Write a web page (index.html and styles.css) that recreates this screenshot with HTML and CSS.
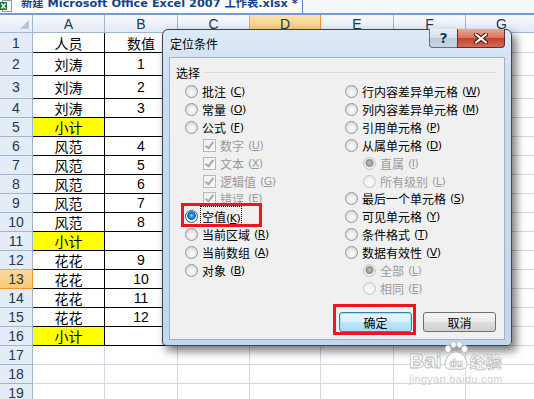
FILE: index.html
```html
<!DOCTYPE html>
<html lang="zh-CN">
<head>
    <meta charset="UTF-8">
    <title>定位条件</title>
    <link rel="stylesheet" href="styles.css">
</head>
<body>
    <div class="tabbar">
        <div class="tab">
            <svg class="xl-icon" width="12" height="12" viewBox="0 0 12 12">
                <rect x="2.5" y="0.5" width="9" height="11" fill="#fff" stroke="#8a9bb0"/>
                <rect x="0" y="2" width="7" height="8" fill="#1f7a3a"/>
                <path d="M1.5 3.5 L5.5 8.5 M5.5 3.5 L1.5 8.5" stroke="#fff" stroke-width="1.3"/>
            </svg>
            <span class="tab-text">新建 Microsoft Office Excel 2007 工作表.xlsx *</span>
        </div>
    </div>

    <div class="sheet">
        <div class="ch corner"><svg width="9" height="9"><path d="M9 0 L9 9 L0 9Z" fill="#b4c5dc"/></svg></div>
        <div class="ch">A</div><div class="ch">B</div><div class="ch">C</div><div class="ch ch-on">D</div><div class="ch">E</div><div class="ch">F</div><div class="ch">G</div>

        <div class="rh">1</div><div class="d">人员</div><div class="d">数值</div><div></div><div></div><div></div><div></div><div></div>
        <div class="rh">2</div><div class="d">刘涛</div><div class="d">1</div><div></div><div></div><div></div><div></div><div></div>
        <div class="rh">3</div><div class="d">刘涛</div><div class="d">2</div><div></div><div></div><div></div><div></div><div></div>
        <div class="rh">4</div><div class="d">刘涛</div><div class="d">3</div><div></div><div></div><div></div><div></div><div></div>
        <div class="rh">5</div><div class="d sub">小计</div><div class="d"></div><div></div><div></div><div></div><div></div><div></div>
        <div class="rh">6</div><div class="d">风范</div><div class="d">4</div><div></div><div></div><div></div><div></div><div></div>
        <div class="rh">7</div><div class="d">风范</div><div class="d">5</div><div></div><div></div><div></div><div></div><div></div>
        <div class="rh">8</div><div class="d">风范</div><div class="d">6</div><div></div><div></div><div></div><div></div><div></div>
        <div class="rh">9</div><div class="d">风范</div><div class="d">7</div><div></div><div></div><div></div><div></div><div></div>
        <div class="rh">10</div><div class="d">风范</div><div class="d">8</div><div></div><div></div><div></div><div></div><div></div>
        <div class="rh">11</div><div class="d sub">小计</div><div class="d"></div><div></div><div></div><div></div><div></div><div></div>
        <div class="rh">12</div><div class="d">花花</div><div class="d">9</div><div></div><div></div><div></div><div></div><div></div>
        <div class="rh rh-on">13</div><div class="d">花花</div><div class="d">10</div><div></div><div></div><div></div><div></div><div></div>
        <div class="rh">14</div><div class="d">花花</div><div class="d">11</div><div></div><div></div><div></div><div></div><div></div>
        <div class="rh">15</div><div class="d">花花</div><div class="d">12</div><div></div><div></div><div></div><div></div><div></div>
        <div class="rh">16</div><div class="d sub">小计</div><div class="d"></div><div></div><div></div><div></div><div></div><div></div>
        <div class="rh">17</div><div></div><div></div><div></div><div></div><div></div><div></div><div></div>
        <div class="rh">18</div><div></div><div></div><div></div><div></div><div></div><div></div><div></div>
        <div class="rh">19</div><div></div><div></div><div></div><div></div><div></div><div></div><div></div>
    </div>

    <div class="dialog">
        <div class="titlebar">
            <span class="title">定位条件</span>
            <div class="caption-btns">
                <span class="cap help">?</span>
                <span class="cap close">
                    <svg width="18" height="11" viewBox="0 0 18 11">
                        <path d="M4 1.5 L14 9.5 M14 1.5 L4 9.5" stroke="#4b1d15" stroke-width="4.2" stroke-linecap="round"/>
                        <path d="M4 1.5 L14 9.5 M14 1.5 L4 9.5" stroke="#fff" stroke-width="2.2" stroke-linecap="round"/>
                    </svg>
                </span>
            </div>
        </div>

        <div class="client">
            <div class="group-head"><span>选择</span><i class="group-line"></i></div>

            <div class="options">
                <div class="col">
                    <div class="opt"><i class="radio"></i>批注 <span class="key">(<u>C</u>)</span></div>
                    <div class="opt"><i class="radio"></i>常量 <span class="key">(<u>O</u>)</span></div>
                    <div class="opt"><i class="radio"></i>公式<span class="key">(<u>F</u>)</span></div>
                    <div class="opt sub-opt off"><i class="check"></i>数字 <span class="key">(<u>U</u>)</span></div>
                    <div class="opt sub-opt off"><i class="check"></i>文本 <span class="key">(<u>X</u>)</span></div>
                    <div class="opt sub-opt off"><i class="check"></i>逻辑值 <span class="key">(<u>G</u>)</span></div>
                    <div class="opt sub-opt off"><i class="check"></i>错误 <span class="key">(<u>E</u>)</span></div>
                    <div class="opt"><i class="radio radio-on"></i><span class="focus">空值<span class="key">(<u>K</u>)</span></span></div>
                    <div class="opt"><i class="radio"></i>当前区域<span class="key">(<u>R</u>)</span></div>
                    <div class="opt"><i class="radio"></i>当前数组<span class="key">(<u>A</u>)</span></div>
                    <div class="opt"><i class="radio"></i>对象<span class="key">(<u>B</u>)</span></div>
                </div>
                <div class="col">
                    <div class="opt"><i class="radio"></i>行内容差异单元格 <span class="key">(<u>W</u>)</span></div>
                    <div class="opt"><i class="radio"></i>列内容差异单元格 <span class="key">(<u>M</u>)</span></div>
                    <div class="opt"><i class="radio"></i>引用单元格 <span class="key">(<u>P</u>)</span></div>
                    <div class="opt"><i class="radio"></i>从属单元格 <span class="key">(<u>D</u>)</span></div>
                    <div class="opt sub-opt off"><i class="radio radio-dim"></i>直属 <span class="key">(<u>I</u>)</span></div>
                    <div class="opt sub-opt off"><i class="radio"></i>所有级别 <span class="key">(<u>L</u>)</span></div>
                    <div class="opt"><i class="radio"></i>最后一个单元格 <span class="key">(<u>S</u>)</span></div>
                    <div class="opt"><i class="radio"></i>可见单元格 <span class="key">(<u>Y</u>)</span></div>
                    <div class="opt"><i class="radio"></i>条件格式 <span class="key">(<u>T</u>)</span></div>
                    <div class="opt"><i class="radio"></i>数据有效性 <span class="key">(<u>V</u>)</span></div>
                    <div class="opt sub-opt off"><i class="radio radio-dim"></i>全部 <span class="key">(<u>L</u>)</span></div>
                    <div class="opt sub-opt off"><i class="radio"></i>相同 <span class="key">(<u>E</u>)</span></div>
                </div>
            </div>

            <div class="buttons">
                <button class="btn btn-default">确定</button>
                <button class="btn">取消</button>
            </div>
        </div>
    </div>

    <div class="mark mark-empty"></div>
    <div class="mark mark-ok"></div>

    <div class="watermark">
        <div class="wm-row">
            <span class="wm-bai">Bai</span>
            <svg class="wm-paw" width="26" height="30" viewBox="0 0 26 30">
                <ellipse cx="5" cy="8" rx="3" ry="3.6" fill="#fff" stroke="#bdbdbd"/>
                <ellipse cx="10.5" cy="3.6" rx="2.8" ry="3.2" fill="#fff" stroke="#bdbdbd"/>
                <ellipse cx="16.5" cy="3.6" rx="2.8" ry="3.2" fill="#fff" stroke="#bdbdbd"/>
                <ellipse cx="21.5" cy="8" rx="3" ry="3.6" fill="#fff" stroke="#bdbdbd"/>
                <path d="M13 11 C 7 11, 2 18, 2 23 C 2 28, 7 29, 13 28 C 19 29, 24 28, 24 23 C 24 18, 19 11, 13 11Z" fill="#fff" stroke="#bdbdbd"/>
                <text x="13" y="26" text-anchor="middle" font-family="Liberation Sans" font-weight="bold" font-size="11" fill="#fff" stroke="#b0b0b0" stroke-width="0.6">du</text>
            </svg>
            <span class="wm-cn">经验</span>
        </div>
        <div class="wm-url">jingyan.baidu.com</div>
    </div>
</body>
</html>
```

FILE: styles.css
```css
body {
    margin: 0;
    width: 534px;
    height: 399px;
    overflow: hidden;
    position: relative;
    background: #fff;
    font-family: "Liberation Sans", "Noto Sans CJK SC", sans-serif;
}

/* workbook tab strip */
.tabbar {
    height: 13px;
    display: flex;
    background: #f4f7fc;
    border-bottom: 2px solid #6f9bd8;
}
.tab {
    width: 302px;
    display: flex;
    gap: 9px;
    overflow: hidden;
    white-space: nowrap;
    background: #fff;
    border-right: 1px solid #5b87c5;
}
.xl-icon {
    flex: none;
}
.tab-text {
    margin-top: -3px;
    font: bold 11.3px/13px "DejaVu Sans", "Noto Sans CJK SC", sans-serif;
    color: #15428b;
}

/* spreadsheet grid */
.sheet {
    display: grid;
    grid-template-columns: 33px 72px 73px 72px 71px 73px 72px 72px;
    grid-template-rows: 18px 20px 23px 23px repeat(16, 19px);
}
.sheet > div {
    box-sizing: border-box;
    display: flex;
    align-items: center;
    justify-content: center;
    border-right: 1px solid #d0d7e5;
    border-bottom: 1px solid #d0d7e5;
    font-size: 14px;
    color: #000;
}
.sheet > .ch {
    background: linear-gradient(#f7f9fd, #e3eaf5);
    border-color: #9eb6ce;
    color: #27364d;
    font-size: 14px;
}
.sheet > .ch-on {
    background: linear-gradient(#fbe3ae, #f3c771);
    border-color: #f29536;
}
.sheet > .corner {
    justify-content: flex-end;
    align-items: flex-end;
    padding: 0 3px 3px 0;
}
.sheet > .rh {
    background: #e4ecf7;
    border-color: #9eb6ce;
    color: #27364d;
    font-size: 14px;
}
.sheet > .rh-on {
    background: linear-gradient(#fbdc9d, #f6c976);
    border-color: #f29536;
}
.sheet > .d {
    border-color: #000;
}
.sheet > .sub {
    background: #ffff00;
}

/* dialog window */
.dialog {
    position: absolute;
    left: 162px;
    top: 29px;
    width: 350px;
    height: 317px;
    box-sizing: border-box;
    display: flex;
    flex-direction: column;
    padding: 0 6px 5px;
    border: 1px solid #3e4650;
    border-radius: 6px 6px 4px 4px;
    background: linear-gradient(#dde9f6, #c9dcf1 60px, #c2d7ee);
    box-shadow: 4px 5px 10px rgba(0, 0, 0, 0.55);
}
.titlebar {
    height: 27px;
    display: flex;
    align-items: flex-start;
}
.title {
    margin: 6px 0 0 1px;
    font: 12px/16px "Noto Sans CJK SC", sans-serif;
    color: #000;
}
.caption-btns {
    display: flex;
    margin-left: auto;
    margin-top: -1px;
}
.cap {
    height: 19px;
    box-sizing: border-box;
    display: flex;
    align-items: center;
    justify-content: center;
    border: 1px solid #5f6f84;
    border-top: none;
}
.help {
    width: 28px;
    border-radius: 0 0 0 4px;
    border-right: none;
    background: linear-gradient(#eaf0f6, #d4dfea 50%, #bccbdb 51%, #c9d6e4);
    font: bold 14px "DejaVu Sans", sans-serif;
    color: #23354e;
    text-shadow: 0 0 2px #fff;
}
.close {
    width: 48px;
    border-radius: 0 0 4px 0;
    border-color: #6b2a20;
    background: linear-gradient(#e9a796, #d9705c 50%, #c4412c 51%, #d46a52);
}

.client {
    flex: 1;
    display: flex;
    flex-direction: column;
    padding: 5px 8px 7px 6px;
    background: #f0f0f0;
    border: 1px solid #9fb3c9;
    font: 12px "Noto Sans CJK SC", sans-serif;
    color: #000;
}
.group-head {
    height: 18px;
    display: flex;
    align-items: center;
}
.group-line {
    flex: 1;
    margin: 1px 0 0 4px;
    border-top: 1px solid #d5dfe5;
}
.options {
    display: grid;
    grid-template-columns: 160px 1fr;
    margin-top: 2px;
    padding-left: 9px;
}
.opt {
    height: 17.85px;
    display: flex;
    align-items: center;
    gap: 4px;
    white-space: nowrap;
}
.sub-opt {
    padding-left: 18px;
}
.off {
    color: #9b9b9b;
}
.key {
    font: 11px "DejaVu Sans", sans-serif;
    letter-spacing: -0.5px;
}
.focus {
    outline: 1px dotted #000;
    outline-offset: 1px;
}

.radio {
    flex: none;
    width: 13px;
    height: 13px;
    box-sizing: border-box;
    border-radius: 50%;
    border: 1px solid #979797;
    background: radial-gradient(circle at 50% 60%, #fcfcfc 0, #ececec 45%, #cdcdcd 90%);
}
.off .radio {
    border-color: #c6c6c6;
    background: radial-gradient(circle at 50% 60%, #fbfbfb 0, #f1f1f1 50%, #e0e0e0 90%);
}
.radio-on {
    border-color: #2c628b;
    background: radial-gradient(circle at 50% 42%, #b9ecff 0, #3aa6ea 1.5px, #0c62b0 3.5px, #1a73b8 4px, #e9eef2 4.6px, #d2d8de 100%);
}
.off .radio-dim {
    background: radial-gradient(circle at 50% 45%, #c8c8c8 0, #8f8f8f 3px, #a5a5a5 3.8px, #efefef 4.5px, #e0e0e0 100%);
}
.check {
    flex: none;
    position: relative;
    width: 13px;
    height: 13px;
    box-sizing: border-box;
    border: 1px solid #b8b8b8;
    background: linear-gradient(135deg, #f0f0f0, #fafafa);
}
.check::after {
    content: "";
    position: absolute;
    left: 3px;
    top: 0px;
    width: 3px;
    height: 7px;
    border: solid #a9a9a9;
    border-width: 0 2px 2px 0;
    transform: rotate(38deg);
}

.buttons {
    margin-top: auto;
    display: flex;
    justify-content: flex-end;
    gap: 11px;
}
.btn {
    width: 73px;
    height: 20px;
    padding: 0;
    border: 1px solid #707070;
    border-radius: 3px;
    background: linear-gradient(#f3f3f3, #ebebeb 50%, #dddddd 51%, #cfcfcf);
    font: 12px "Noto Sans CJK SC", sans-serif;
    color: #000;
}
.btn-default {
    border-color: #3c7fb1;
    box-shadow: inset 0 0 0 1px #9ee3f8;
    background: linear-gradient(#eaf6fd, #d9f0fc 50%, #bee6fd 51%, #a7d9f5);
}

/* annotation boxes drawn over the screenshot */
.mark {
    position: absolute;
    border: 3px solid #f2141c;
    box-sizing: border-box;
}
.mark-empty {
    left: 181px;
    top: 203px;
    width: 81px;
    height: 24px;
}
.mark-ok {
    left: 333px;
    top: 304px;
    width: 83px;
    height: 31px;
}

/* site watermark */
.watermark {
    position: absolute;
    left: 409px;
    top: 341px;
    display: flex;
    flex-direction: column;
}
.wm-row {
    display: flex;
    align-items: flex-end;
    gap: 1px;
}
.wm-bai {
    font: bold 21px/20px "Liberation Sans", sans-serif;
    color: #fff;
    -webkit-text-stroke: 0.8px #b8b8b8;
}
.wm-cn {
    font: bold 16px/19px "Noto Sans CJK SC", sans-serif;
    color: #fff;
    -webkit-text-stroke: 0.7px #b8b8b8;
}
.wm-url {
    margin-top: 2px;
    font: 11px "Liberation Sans", sans-serif;
    color: #cfcfcf;
    letter-spacing: 0.3px;
}
```
